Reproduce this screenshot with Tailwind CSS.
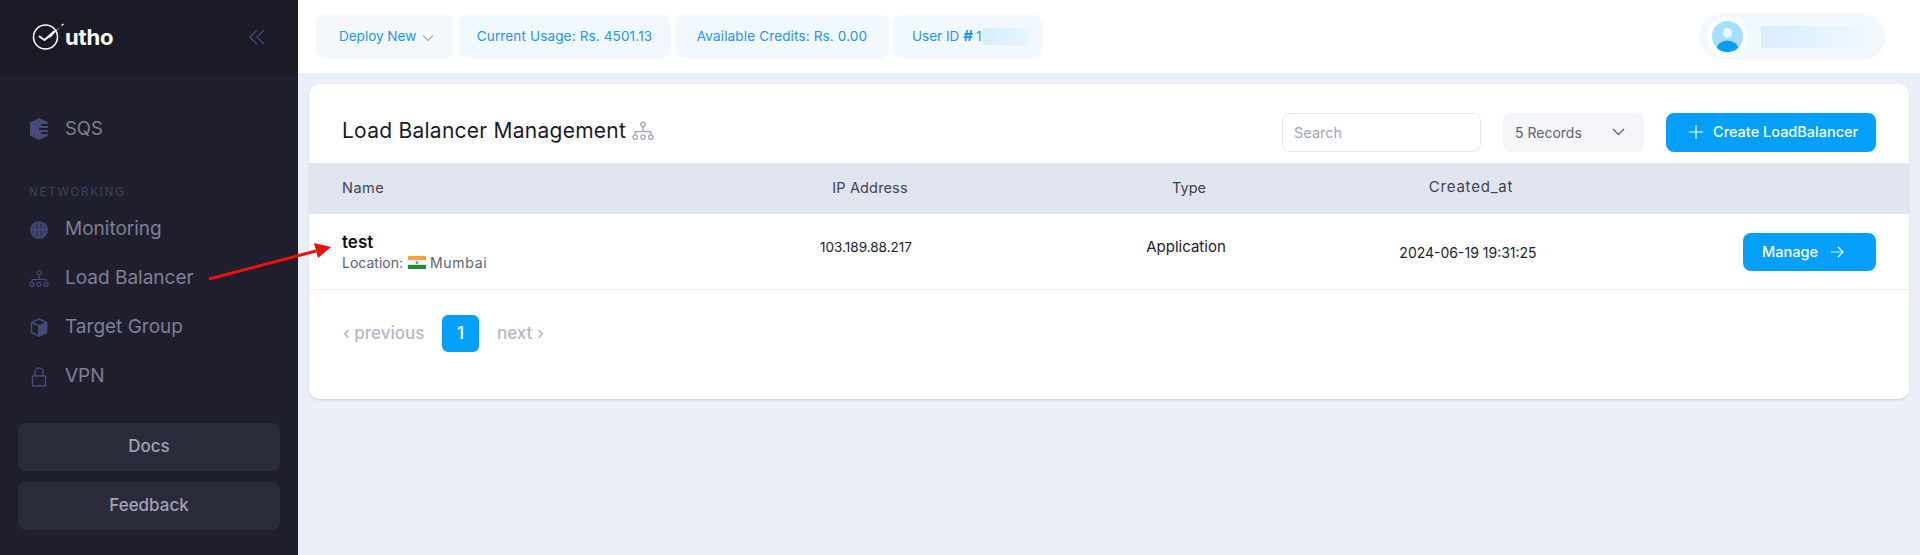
<!DOCTYPE html>
<html lang="en">
<head>
  <meta charset="UTF-8" />
  <title>Load Balancer Management</title>
  <script src="https://cdn.jsdelivr.net/npm/@tailwindcss/browser@4"></script>
</head>
<body class="bg-[#ebf0f8] font-['Inter','Liberation_Sans',sans-serif] overflow-hidden">
  <div class="relative flex h-[555px] w-[1920px] overflow-hidden">
    <!-- sidebar -->
    <aside class="w-[298px] shrink-0 bg-[#1e1e2d] flex flex-col">
      <div class="h-[73px] bg-[#1a1a27] flex items-center pl-[32px] pr-[33px]">
        <svg class="w-[33px] h-[27px]" viewBox="0 0 33 27" fill="none">
          <circle cx="13.500" cy="14" r="12" stroke="#fff" stroke-width="1.500"/>
          <path d="M7.500 13.500l5 3.500L22 8.500" stroke="#fff" stroke-width="1.800" stroke-linecap="round" stroke-linejoin="round"/>
          <path d="M12.500 17L28 4l-9 10z" fill="#fff"/>
          <path d="M29.500 2.500l2-1.500" stroke="#fff" stroke-width="1.400"/>
        </svg>
        <span class="ml-[0px] text-[22px] leading-none font-bold text-white tracking-[-0.2px]">utho</span>
        <svg class="ml-auto w-[16px] h-[16px]" viewBox="0 0 16 16" fill="none" stroke="#3f4170" stroke-width="1.600">
          <path d="M8 1L1 8l7 7"/><path d="M15 1L8 8l7 7"/>
        </svg>
      </div>
      <nav class="flex flex-col text-[19px] text-[#7f7f95]">
        <div class="mt-[31px] h-[49px] flex items-center pl-[30px] gap-[17px]">
          <svg class="w-[18px] h-[22px]" viewBox="0 0 18 22" fill="#464b7c"><path d="M9 0l9 4.500v13L9 22l-9-4.500v-13z"/><path d="M11 6h7v2h-7zM9 10h9v2H9zM11 14h7v2h-7z" fill="#1e1e2d"/></svg>
          <span class="text-[18.500px]">SQS</span>
        </div>
        <div class="mt-[32px] pl-[29px] text-[11.500px] leading-[14px] tracking-[1.800px] text-[#3f4060]">NETWORKING</div>
        <div class="mt-[6px] h-[49px] flex items-center pl-[30px] gap-[17px]">
          <svg class="w-[18px] h-[18px]" viewBox="0 0 18 18" fill="none" stroke="#464b7c" stroke-width="1.600"><circle cx="9" cy="9" r="8" fill="#34385f"/><path d="M9 1v16M1 9h16M3.500 3.500C6 6 6 12 3.500 14.500M14.500 3.500C12 6 12 12 14.500 14.500"/></svg>
          <span>Monitoring</span>
        </div>
        <div class="h-[49px] flex items-center pl-[30px] gap-[17px]">
          <svg class="w-[20px] h-[18px] ml-[-1px] mr-[-1px]" viewBox="0 0 20 18" fill="none" stroke="#464b7c" stroke-width="1.200"><circle cx="10" cy="3" r="2"/><path d="M10 5v4M3 12V9.500h14V12"/><circle cx="3" cy="14.500" r="2"/><circle cx="10" cy="14.500" r="2"/><circle cx="17" cy="14.500" r="2"/></svg>
          <span>Load Balancer</span>
        </div>
        <div class="h-[49px] flex items-center pl-[30px] gap-[17px]">
          <svg class="w-[18px] h-[19px]" viewBox="0 0 18 19" fill="none" stroke="#464b7c" stroke-width="1.400"><path d="M9 1l7.500 3.500v10L9 18l-7.500-3.500v-10z"/><path d="M1.500 4.500L9 8v10"/><path d="M9 8l7.500-3.500v10L9 18z" fill="#464b7c"/></svg>
          <span>Target Group</span>
        </div>
        <div class="h-[49px] flex items-center pl-[30px] gap-[17px]">
          <svg class="w-[18px] h-[20px]" viewBox="0 0 18 20" fill="none" stroke="#464b7c" stroke-width="1.400"><rect x="2.500" y="9" width="13" height="10"/><path d="M5 9V5a4 4 0 0 1 8 0v4"/></svg>
          <span>VPN</span>
        </div>
      </nav>
      <div class="mt-[22px] px-[18px] flex flex-col gap-[11px] text-[17px] font-medium text-[#a1a1b5]">
        <div class="h-[48px] rounded-lg bg-[#2a2b3a] flex items-center justify-center">Docs</div>
        <div class="h-[48px] rounded-lg bg-[#2a2b3a] flex items-center justify-center">Feedback</div>
      </div>
    </aside>

    <main class="flex-1 min-w-0 flex flex-col">
      <!-- top bar -->
      <header class="h-[73px] bg-white flex items-center pl-[18px] pr-[34px] text-[13.500px] text-[#2196f3]">
        <div class="h-[43px] w-[138px] rounded-lg bg-[#f5f8fb] flex items-center pl-[23px] gap-[6px]">
          Deploy New
          <svg class="w-[12px] h-[8px] mt-[2px]" viewBox="0 0 12 8" fill="none" stroke="#a8acbd" stroke-width="1.200"><path d="M1 1.500l5 5 5-5"/></svg>
        </div>
        <div class="ml-[4px] h-[43px] w-[213px] rounded-lg bg-[#f1f9ff] flex items-center justify-center tracking-[0.150px]">Current Usage: Rs. 4501.13</div>
        <div class="ml-[4px] h-[43px] w-[214px] rounded-lg bg-[#f1f9ff] flex items-center justify-center tracking-[0.150px]">Available Credits: Rs. 0.00</div>
        <div class="ml-[4px] h-[43px] w-[149px] rounded-lg bg-[#f1f9ff] flex items-center pl-[19px]">
          User ID <b class="ml-[4px] text-[15px] font-bold">#</b> <span class="ml-[3px]">1</span>
          <span class="ml-[1px] w-[48px] h-[17px] bg-gradient-to-r from-[#d5edfd] to-[#ebf6fe]"></span>
        </div>
        <div class="ml-auto h-[45px] w-[187px] rounded-full bg-[#f1f9ff] flex items-center pl-[8px]">
          <div class="w-[40px] h-[40px] rounded-full bg-white flex items-center justify-center">
            <svg class="w-[31px] h-[31px] rounded-full" viewBox="0 0 31 31"><rect width="31" height="31" fill="#a7defd"/><ellipse cx="15.500" cy="12" rx="4.500" ry="5" fill="#e9f6fe"/><ellipse cx="15.500" cy="29" rx="11" ry="9.500" fill="#039ff6"/></svg>
          </div>
          <span class="ml-[14px] w-[105px] h-[22px] bg-gradient-to-r from-[#d8edfd] to-[#eef8fe]"></span>
        </div>
      </header>

      <!-- card -->
      <section class="mt-[11px] ml-[11px] w-[1600px] h-[315px] rounded-[10px] bg-white shadow-sm overflow-hidden">
        <div class="h-[79px] flex items-center pl-[33px] pr-[33px] pt-[17px]">
          <h1 class="text-[21px] mb-[3px] font-normal text-[#1a1a2b] tracking-[0.250px]">Load Balancer Management</h1>
          <svg class="ml-[5px] mt-[-2px] w-[24px] h-[20px]" viewBox="0 0 20 18" fill="none" stroke="#a3a7ba" stroke-width="1.200"><circle cx="10" cy="3" r="2"/><path d="M10 5v4M3 12V9.500h14V12"/><circle cx="3" cy="14.500" r="2"/><circle cx="10" cy="14.500" r="2"/><circle cx="17" cy="14.500" r="2"/></svg>
          <input placeholder="Search" class="ml-auto w-[199px] h-[39px] rounded-lg border border-[#e5e6ef] pl-[11px] text-[14.500px] placeholder:text-[#a1a5b7] outline-none" />
          <div class="ml-[22px] w-[141px] h-[39px] rounded-lg bg-[#f4f6fa] flex items-center pl-[12px] pr-[19px] text-[14px] text-[#5e6278]">
            5 Records
            <svg class="ml-auto w-[13px] h-[8px]" viewBox="0 0 13 8" fill="none" stroke="#5e6278" stroke-width="1.300"><path d="M1 1l5.500 5.500L12 1"/></svg>
          </div>
          <button class="ml-[22px] w-[210px] h-[39px] rounded-lg bg-[#039ff9] flex items-center pl-[23px] text-[14.500px] font-medium text-white">
            <svg class="w-[14px] h-[14px] mr-[10px]" viewBox="0 0 14 14" stroke="#fff" stroke-width="1.200"><path d="M7 0v14M0 7h14"/></svg>
            Create LoadBalancer
          </button>
        </div>
        <div class="h-[51px] pb-[2px] bg-[#e1e5ef] flex items-center text-[14.500px] text-[#3f4254]">
          <div class="w-[401px] pl-[33px] tracking-[0.500px]">Name</div>
          <div class="w-[320px] text-center tracking-[0.150px]">IP Address</div>
          <div class="w-[318px] text-center">Type</div>
          <div class="w-[246px] text-center text-[15px] tracking-[0.800px]">Created_at</div>
        </div>
        <div class="h-[76px] border-b border-[#ecedf2] flex items-center text-[13.500px] text-[#1f2130]">
          <div class="w-[401px] pl-[33px]">
            <div class="text-[17px] leading-[22px] font-semibold text-[#11111b]">test</div>
            <div class="flex items-center text-[14px] text-[#5e6278] leading-[20px]">Location:
              <svg class="ml-[5px] mr-[4px] w-[18px] h-[13px]" viewBox="0 0 18 13"><rect width="18" height="4.400" fill="#f6a23c"/><rect y="4.400" width="18" height="4.400" fill="#fff"/><rect y="8.800" width="18" height="4.200" fill="#1f8a30"/><circle cx="9" cy="6.500" r="1.500" fill="#8d8fb8"/></svg>
              <span class="tracking-[0.700px]">Mumbai</span>
            </div>
          </div>
          <div class="w-[312px] text-center mb-[8px]">103.189.88.217</div>
          <div class="w-[328px] text-center mb-[8px] text-[15px]">Application</div>
          <div class="w-[236px] text-center mt-[2px] text-[14px]">2024-06-19 19:31:25</div>
          <button class="ml-auto mr-[33px] w-[133px] h-[38px] rounded-lg bg-[#039ff9] flex items-center pl-[19px] text-[14.500px] font-medium text-white">
            Manage
            <svg class="ml-[13px] w-[13px] h-[12px]" viewBox="0 0 13 12" fill="none" stroke-width="1.300"><path d="M0 6h11" stroke="#8fd3fb"/><path d="M7 1l5 5-5 5" stroke="#fff"/></svg>
          </button>
        </div>
        <div class="mt-[25px] pl-[34px] flex items-center text-[17px] font-medium text-[#b5b8c9]">
          <span class="w-[99px]">&lsaquo; previous</span>
          <span class="w-[37px] h-[37px] rounded-md bg-[#039ff9] text-white flex items-center justify-center">1</span>
          <span class="ml-[18px]">next &rsaquo;</span>
        </div>
      </section>
    </main>

    <!-- annotation arrow -->
    <svg class="absolute left-0 top-0 pointer-events-none" width="400" height="300" viewBox="0 0 400 300" fill="none">
      <path d="M209 279L316 251" stroke="#ee0f0f" stroke-width="3"/>
      <path d="M331 247L314 243L318 258Z" fill="#ee0f0f"/>
    </svg>
  </div>
</body>
</html>
